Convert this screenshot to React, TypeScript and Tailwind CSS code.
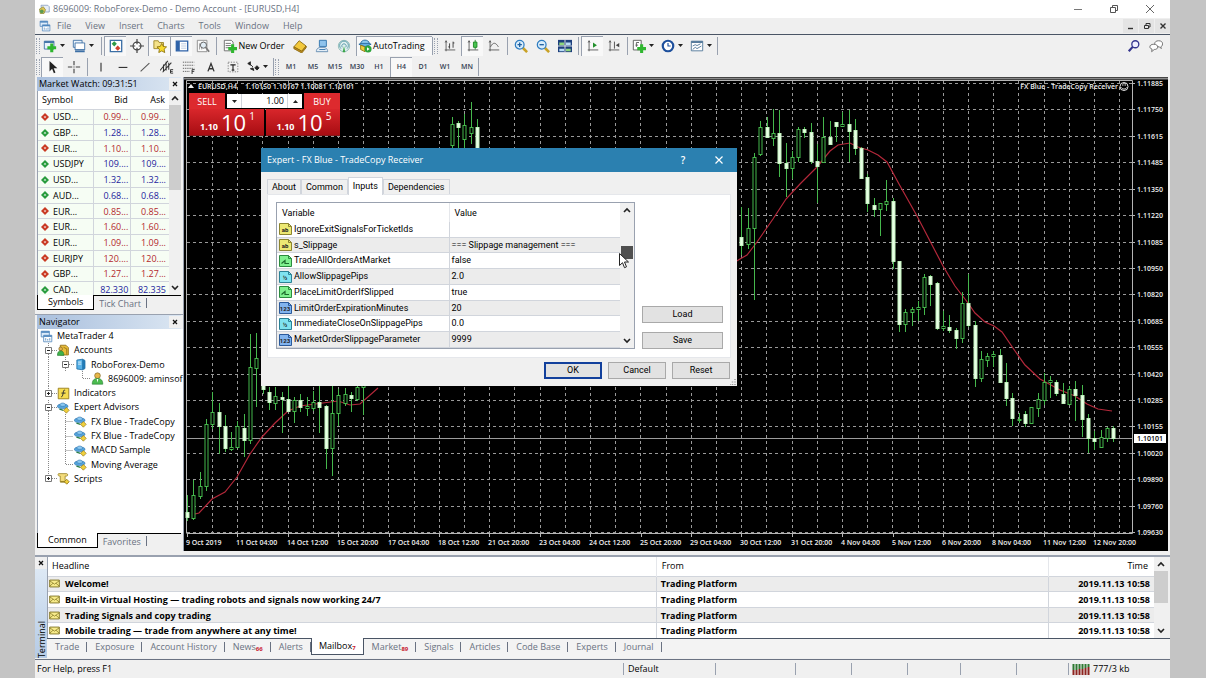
import type { ReactNode } from 'react';
import clsx from 'clsx';

/* ---------- icons ---------- */

const axes = <path d="M3.5 2v12M2 12.5h12M2.5 4l1-2 1 2" fill="none" stroke="#555" />;
const greenPlus = (x: number, y: number) => (
  <path
    d={`M${x} ${y - 5}v10M${x - 5} ${y}h10`}
    stroke="#2fb62f"
    strokeWidth="3.5"
    fill="none"
  />
);
const hat = (
  <>
    <ellipse cx="7" cy="6.5" rx="6.5" ry="2.8" fill="#55a5de" stroke="#2a6ea8" strokeWidth=".7" />
    <path d="M3.5 5.5C3.5 1.5 10.5 1.5 10.5 5.5 9 7 5 7 3.5 5.5z" fill="#8ccaf2" stroke="#2a6ea8" strokeWidth=".7" />
    <path d="M3 10l5 1.5" stroke="#2a7c46" strokeWidth="1.5" />
    <path d="M11.5 8l3.500 3.500-3.500 3.500L8 11.500z" fill="#f0cf3c" stroke="#8c7212" strokeWidth=".8" />
  </>
);

const icons: Record<string, ReactNode> = {
  app: (
    <>
      <path d="M4 3h9l2 2v7H5z" fill="#e8eef6" stroke="#7d96bb" />
      <path d="M2 8l5-3 3 4-2 5H3z" fill="#e0c352" stroke="#8a8a3a" />
      <circle cx="5" cy="11" r="2.5" fill="#5a9b53" />
    </>
  ),
  windows: (
    <>
      <path d="M1.5 1.5h10v7h-10z" fill="#dcebfa" stroke="#4f86bd" />
      <path d="M1.5 2.5h10" stroke="#4f86bd" strokeWidth="2" />
      <path d="M4.5 6.5h10v8h-10z" fill="#fff" stroke="#4f86bd" />
      <path d="M4.5 7.5h10" stroke="#4f86bd" strokeWidth="2" />
      <path d="M7 13v-3M9.5 13v-2M12 13v-3" stroke="#4f86bd" />
    </>
  ),
  newChart: (
    <>
      <path d="M1.5 2.5h11v9h-11z" fill="#e8f2fb" stroke="#3c6fa5" />
      <path d="M1.5 3.5h11" stroke="#3c6fa5" strokeWidth="2" />
      {greenPlus(10, 10)}
    </>
  ),
  profiles: (
    <>
      <path d="M1.5 1.5h10v8h-10z" fill="#e8f2fb" stroke="#3c6fa5" />
      <path d="M3.5 4.5h11v8h-11z" fill="#fff" stroke="#3c6fa5" />
      <path d="M3.5 12.5h11M3.5 14.5h11" stroke="#3c6fa5" strokeWidth="1.5" />
    </>
  ),
  marketWatch: (
    <>
      <path d="M1.5 1.5h13v13h-13z" fill="#fff" stroke="#3c6fa5" strokeWidth="1.5" />
      <path d="M6 2.5L9 5.5 6 8.5 3 5.5z" fill="#2f9a46" />
      <path d="M10 7.5l3 3-3 3-3-3z" fill="#d2402f" />
    </>
  ),
  target: (
    <>
      <circle cx="8" cy="8" r="4.5" fill="#fff" stroke="#444" strokeWidth="1.4" />
      <path d="M8 0v6M8 10v6M0 8h6M10 8h6" stroke="#444" strokeWidth="1.4" />
    </>
  ),
  star: (
    <>
      <path d="M1 2h5l1 2h5v7H1z" fill="#f4e28a" stroke="#9a8424" />
      <path d="M10 5l1.7 3.5 3.8.5-2.8 2.6.7 3.9-3.4-1.9-3.4 1.9.7-3.9L4.5 9l3.800-.5z" fill="#f6d92e" stroke="#8e7410" />
    </>
  ),
  terminal: (
    <>
      <path d="M1.5 2.5h13v11h-13z" fill="#fff" stroke="#2e62a8" strokeWidth="1.5" />
      <path d="M2 2.5h3.5v11H2z" fill="#2e62a8" />
      <path d="M7 5.5h6M7 8h6M7 10.5h6" stroke="#b4c6de" />
    </>
  ),
  tester: (
    <>
      <path d="M1.5 1.5h11v13h-11z" fill="#fafafa" stroke="#888" />
      <path d="M4 12V5M6.5 12V8" stroke="#999" />
      <circle cx="8.5" cy="7" r="3.5" fill="#e2edf5" stroke="#555" />
      <path d="M11 9.5l4 5" stroke="#777" strokeWidth="2" />
    </>
  ),
  order: (
    <>
      <path d="M1.5 1.5h8l2 2v10h-10z" fill="#fff" stroke="#666" />
      <path d="M3 5h6M3 7.5h6M3 10h4" stroke="#666" />
      {greenPlus(11, 11)}
    </>
  ),
  book: (
    <>
      <path d="M1 9l6-7 8 6-5 6z" fill="#f3c93c" stroke="#8a6a10" />
      <path d="M1 9v2l9 5 5-6V8l-5 6z" fill="#c98f1e" stroke="#8a6a10" />
    </>
  ),
  person: (
    <>
      <path d="M5 1.5h8v7H5z" fill="#8fc3ec" stroke="#2d70aa" />
      <path d="M1.5 14.5c0-4 3-5 6.500-5s6.500 1 6.500 5z" fill="#e4eef7" stroke="#5b86ad" />
      <path d="M5 12h7" stroke="#2d70aa" />
    </>
  ),
  signal: (
    <>
      <circle cx="8" cy="8" r="6.5" fill="#dff0ee" stroke="#8ab8b5" />
      <path d="M4.5 11a5 5 0 1 1 7 0M6 9.5a2.500 2.500 0 1 1 4 0" fill="none" stroke="#4f94a6" />
      <path d="M8 8l-1.500 7h3z" fill="#39a447" />
    </>
  ),
  autoTrading: (
    <>
      <path d="M1 6l7-3 7 3-7 3z" fill="#62aee2" stroke="#24669c" />
      <path d="M3 7v5l5 2.500V9z" fill="#f0cf3c" stroke="#8e7410" />
      <path d="M3 5C4 0 12 0 13 5z" fill="#8dcaf1" stroke="#24669c" />
      <circle cx="11.5" cy="11.5" r="4" fill="#2da53b" />
      <path d="M10.3 9.500v4l3-2z" fill="#fff" />
    </>
  ),
  bars: (
    <>
      {axes}
      <path d="M7.5 5v6M7.5 9H6M11.5 3v7M11.5 4.5H13" stroke="#333" fill="none" />
    </>
  ),
  candles: (
    <>
      {axes}
      <path d="M10.5 1v11" stroke="#19861f" />
      <path d="M8.5 3.5h4v6h-4z" fill="#48c44f" stroke="#19861f" />
    </>
  ),
  line: (
    <>
      {axes}
      <path d="M4 9c3-6 6-5 9 0" fill="none" stroke="#555" />
    </>
  ),
  zoomIn: (
    <>
      <path d="M10 10l5 5" stroke="#c9a227" strokeWidth="3" />
      <circle cx="6.5" cy="6.5" r="5" fill="#d9edfb" stroke="#2e7cc0" strokeWidth="1.4" />
      <path d="M4 6.5h5M6.5 4v5" stroke="#1f5fa0" strokeWidth="1.5" />
    </>
  ),
  zoomOut: (
    <>
      <path d="M10 10l5 5" stroke="#c9a227" strokeWidth="3" />
      <circle cx="6.5" cy="6.5" r="5" fill="#d9edfb" stroke="#2e7cc0" strokeWidth="1.4" />
      <path d="M4 6.5h5" stroke="#1f5fa0" strokeWidth="1.5" />
    </>
  ),
  tile: (
    <>
      <path d="M0 1h16v14H0z" fill="#1d3f7c" />
      <path d="M1.5 4h5.500v3H1.500zM9 11h5.500v3H9z" fill="#8ed67d" />
      <path d="M9 4h5.500v3H9zM1.500 11h5.500v3H1.500z" fill="#b9dcf5" />
      <path d="M8 1v14M0 8h16" stroke="#f0f0f0" />
    </>
  ),
  autoScroll: (
    <>
      {axes}
      <path d="M8 4v6l4.500-3z" fill="#22902c" />
    </>
  ),
  shift: (
    <>
      {axes}
      <path d="M8.5 3v8" stroke="#444" />
      <path d="M14 4.500v5L10 7z" fill="#444" />
    </>
  ),
  indicator: (
    <>
      <path d="M1.5 1.5h9v11h-9z" fill="#fff" stroke="#555" />
      <path d="M5 9V4h3M4 7h3" stroke="#555" fill="none" />
      {greenPlus(11, 11)}
    </>
  ),
  clock: (
    <>
      <circle cx="8" cy="8" r="6" fill="#fff" stroke="#1d4f9c" strokeWidth="2.5" />
      <path d="M8 4.500V8h3" fill="none" stroke="#1d4f9c" strokeWidth="1.3" />
    </>
  ),
  template: (
    <>
      <path d="M1.5 2.5h13v11h-13z" fill="#fff" stroke="#4c7396" />
      <path d="M1.5 3.5h13" stroke="#4c7396" strokeWidth="2" />
      <path d="M3 8l3-1.500 2 1 4-2M3 12l3-2.500 2 1.500 5-3" fill="none" stroke="#4c7396" />
    </>
  ),
  cursor: <path d="M4 1v12l3-3 2 5 1.800-.8L8.800 9.500H13z" fill="#222" />,
  cross: <path d="M8 1v5M8 10v5M1 8h5M10 8h5M8 7.500v1" stroke="#444" strokeWidth="1.3" />,
  vline: <path d="M8 3v10" stroke="#333" strokeWidth="1.3" />,
  hline: <path d="M3 8.500h10" stroke="#333" strokeWidth="1.3" />,
  trend: <path d="M3 13L13 3.500" stroke="#555" strokeWidth="1.2" />,
  channel: (
    <>
      <path d="M0 12L9 1M3 14L13 3M7 2v10M4 5v8M10 3v8" stroke="#333" strokeWidth="1.2" />
      <path d="M15 11h-3v4h3M12 13h2.500" stroke="#222" fill="none" />
    </>
  ),
  fibo: (
    <>
      <path d="M1 2.500h13M1 6h13M1 9.500h13M1 13h8" stroke="#555" strokeDasharray="1.5 1" />
      <path d="M14.5 11h-3v5M11.500 13h2.500" stroke="#222" fill="none" />
    </>
  ),
  textA: <path d="M4.500 13L8 4l3.500 9M6 10h4" stroke="#333" strokeWidth="1.5" fill="none" />,
  textT: (
    <>
      <path d="M2.500 2.500h11v11h-11z" fill="none" stroke="#777" strokeDasharray="1.5 1.5" />
      <path d="M5 5.500h6M8 5.500v6M6.500 11.500h3" stroke="#222" strokeWidth="1.3" />
    </>
  ),
  arrows: (
    <path d="M2 4l3-2v4zM5 5l3 3M10 9l2.500-2.500L15 9l-2.500 2.500zM5 10l3-1 1 3z" fill="#222" stroke="#222" />
  ),
  search: (
    <>
      <circle cx="9.500" cy="6" r="4" fill="#eef" stroke="#34348e" strokeWidth="1.5" />
      <path d="M6.500 9L2 14" stroke="#34348e" strokeWidth="2.5" />
    </>
  ),
  chat: (
    <>
      <path d="M11 2c3 0 4.500 1.500 4.500 3.500S14 9 13.500 9l.5 2-2-2C8 9 6.500 7.500 6.500 5.500S8 2 11 2z" fill="#fff" stroke="#666" />
      <path d="M5.500 6C8.500 6 10 7.500 10 9.200S8.500 12 6 12l-3 2.500.5-3C1.500 11 1 10 1 9c0-1.700 1.500-3 4.500-3z" fill="#fff" stroke="#666" />
    </>
  ),
  accounts: (
    <>
      <path d="M4 1.500h7l3 3v9H4z" fill="#e9bd3a" stroke="#8e6b12" />
      <path d="M8 4l4 2v7" fill="none" stroke="#8e6b12" />
      <circle cx="4.500" cy="6" r="2.300" fill="#e4b24c" stroke="#6e5518" strokeWidth=".7" />
      <path d="M.5 14c0-4 1.500-5.500 4-5.500S8.500 10 8.500 14z" fill="#3fb24b" stroke="#20772a" strokeWidth=".7" />
    </>
  ),
  server: (
    <>
      <path d="M3.500 2.500l7-1v13l-7-1z" fill="#57b2e8" stroke="#1f6ea5" />
      <path d="M10.500 1.500l3 1.500v10l-3 1.500" fill="#1f7cba" stroke="#1f6ea5" />
      <path d="M5 5h4M5 7.500h4" stroke="#fff" />
    </>
  ),
  user: (
    <>
      <circle cx="8" cy="4.500" r="3.500" fill="#e8b74a" stroke="#6e5518" strokeWidth=".7" />
      <path d="M1.500 15c0-5 2.500-7 6.500-7s6.500 2 6.500 7z" fill="#4bbb4f" stroke="#20772a" strokeWidth=".7" />
      <path d="M7 8.500h2L8 13z" fill="#fff" />
    </>
  ),
  fx: (
    <>
      <path d="M1.500 1.500h13v13h-13z" fill="#f5dc50" stroke="#8e7410" />
      <path d="M10 4c-2-1-2 1-2.500 4S6 12.500 5 12M5.500 7.500h5" fill="none" stroke="#333" strokeWidth="1.2" />
    </>
  ),
  expert: hat,
  script: (
    <>
      <path d="M2 2h10c1.500 0 1.500 3 0 3h-2v7H4V5H3C1 5 1 2 2 2z" fill="#f3dc7c" stroke="#9a8424" />
      <path d="M4 12h7" stroke="#9a8424" strokeWidth="2" />
      <path d="M12 9l3 3-3 3-3-3z" fill="#f0cf3c" stroke="#8c7212" />
    </>
  ),
  mail: (
    <>
      <path d="M1 3h14v10H1z" fill="#f7eb8a" stroke="#7c6f1d" strokeWidth="1.3" />
      <path d="M1 4l7 5 7-5M1 12l5-4.500M15 12l-5-4.500" fill="none" stroke="#7c6f1d" />
    </>
  ),
};

function Icon({ name, className = 'size-[14px]' }: { name: string; className?: string }) {
  return (
    <svg viewBox="0 0 16 16" className={clsx('shrink-0', className)} aria-hidden="true">
      {icons[name]}
    </svg>
  );
}

/* ---------- toolbar parts ---------- */

const Grip = () => <span className="w-1 h-4 mx-px border-x border-dotted border-gray-400" />;
const Sep = () => <span className="w-px h-[18px] mx-[2px] bg-gray-400" />;
const Caret = () => (
  <svg viewBox="0 0 5 3" className="w-[5px] h-[3px]" aria-hidden="true">
    <path d="M0 0h5L2.500 3z" fill="#222" />
  </svg>
);

type ToolProps = { icon: string; label: string; active?: boolean; menu?: boolean };

function Tool({ icon, label, active, menu }: ToolProps) {
  return (
    <button
      aria-label={label}
      className={clsx(
        'h-5 flex items-center',
        menu ? 'w-[29px] gap-[3px] pl-[2px]' : 'w-[22px] justify-center',
        active && 'bg-[#f8f8f8] border-t border-l border-gray-400',
      )}
    >
      <Icon name={icon} />
      {menu && <Caret />}
    </button>
  );
}

const Chevron = ({ up }: { up?: boolean }) => (
  <svg viewBox="0 0 8 6" className="w-2 h-[6px]" aria-hidden="true">
    <path d={up ? 'M1 5l3-3 3 3' : 'M1 1l3 3 3-3'} fill="none" stroke="#222" strokeWidth="1.6" />
  </svg>
);

function ScrollBar({ thumb, className }: { thumb: string; className?: string }) {
  return (
    <div className={clsx('flex flex-col items-stretch bg-[#f0f0f0] shrink-0', className)}>
      <button aria-label="Scroll up" className="h-[14px] flex items-center justify-center">
        <Chevron up />
      </button>
      <div className="flex-1">
        <div className={thumb} />
      </div>
      <button aria-label="Scroll down" className="h-[14px] flex items-center justify-center">
        <Chevron />
      </button>
    </div>
  );
}

/* ---------- header ---------- */

function TitleBar() {
  return (
    <header className="h-[18px] flex items-center bg-white text-gray-500 pl-[3px]">
      <Icon name="app" className="size-3" />
      <h1 className="ml-[3px] flex-1">8696009: RoboForex-Demo - Demo Account - [EURUSD,H4]</h1>
      <div className="flex pr-[2px]">
        <button aria-label="Minimize" className="w-9 flex justify-center">
          <svg viewBox="0 0 10 10" className="size-[10px]"><path d="M1 5.500h8" stroke="#777" /></svg>
        </button>
        <button aria-label="Restore" className="w-9 flex justify-center">
          <svg viewBox="0 0 10 10" className="size-[10px]">
            <path d="M1.500 3.500h5v5h-5zM3.500 3V1.500h5v5H7" fill="none" stroke="#555" />
          </svg>
        </button>
        <button aria-label="Close" className="w-9 flex justify-center">
          <svg viewBox="0 0 10 10" className="size-[10px]"><path d="M1 1l8 8M9 1L1 9" stroke="#666" /></svg>
        </button>
      </div>
    </header>
  );
}

function MenuBar() {
  const menus = ['File', 'View', 'Insert', 'Charts', 'Tools', 'Window', 'Help'];
  return (
    <nav className="h-[17px] flex items-center bg-[#efefef] border-b border-gray-600 pl-1 text-gray-500">
      <Icon name="windows" className="size-3 mr-[6px]" />
      <div className="flex-1 flex gap-[14px]">
        {menus.map((m) => (
          <button key={m}>{m}</button>
        ))}
      </div>
      <div className="flex gap-px">
        <button aria-label="Minimize chart" className="w-[15px] h-[14px] bg-[#e4e4e4] flex items-center justify-center">
          <svg viewBox="0 0 8 8" className="size-2"><path d="M1 6.500h5" stroke="#333" strokeWidth="1.4" /></svg>
        </button>
        <button aria-label="Restore chart" className="w-[15px] h-[14px] bg-[#e4e4e4] flex items-center justify-center">
          <svg viewBox="0 0 8 8" className="size-2">
            <path d="M1.500 3.500h4v3h-4zM3 3V1.500h4V5H6" fill="none" stroke="#333" />
          </svg>
        </button>
        <button aria-label="Close chart" className="w-[15px] h-[14px] bg-[#e4e4e4] flex items-center justify-center">
          <svg viewBox="0 0 8 8" className="size-2"><path d="M1.500 1.500l5 5M6.500 1.500l-5 5" stroke="#333" strokeWidth="1.4" /></svg>
        </button>
      </div>
    </nav>
  );
}

function Toolbars() {
  const frames = ['M1', 'M5', 'M15', 'M30', 'H1', 'H4', 'D1', 'W1', 'MN'];
  return (
    <div className="bg-[#f0f0f0]">
      <div className="h-[21px] flex items-center">
        <Grip />
        <Tool icon="newChart" label="New chart" menu />
        <Tool icon="profiles" label="Profiles" menu />
        <Sep />
        <Tool icon="marketWatch" label="Market Watch" active />
        <Tool icon="target" label="Data Window" />
        <Tool icon="star" label="Navigator" active />
        <Tool icon="terminal" label="Terminal" active />
        <Tool icon="tester" label="Strategy Tester" />
        <Sep />
        <button className="h-5 w-[70px] flex items-center justify-center gap-px text-black">
          <Icon name="order" />
          New Order
        </button>
        <Tool icon="book" label="MetaEditor" />
        <Tool icon="person" label="Account" />
        <Tool icon="signal" label="Signals" />
        <button className="h-5 w-[76px] ml-px flex items-center gap-px pl-px text-black bg-[#f8f8f8] border-t border-l border-gray-400">
          <Icon name="autoTrading" />
          AutoTrading
        </button>
        <span className="w-px h-[18px] bg-gray-400" />
        <Grip />
        <Tool icon="bars" label="Bar chart" />
        <Tool icon="candles" label="Candlesticks" active />
        <Tool icon="line" label="Line chart" />
        <Sep />
        <Tool icon="zoomIn" label="Zoom in" />
        <Tool icon="zoomOut" label="Zoom out" />
        <Tool icon="tile" label="Tile windows" />
        <Sep />
        <Tool icon="autoScroll" label="Auto scroll" active />
        <Tool icon="shift" label="Chart shift" />
        <Sep />
        <Tool icon="indicator" label="Indicators" menu />
        <Tool icon="clock" label="Periods" menu />
        <Tool icon="template" label="Templates" menu />
        <span className="w-px h-[18px] bg-gray-400" />
        <div className="ml-auto flex items-center pr-[3px]">
          <Tool icon="search" label="Search" />
          <Tool icon="chat" label="Community" />
        </div>
      </div>
      <div className="h-[21px] flex items-center">
        <Grip />
        <Tool icon="cursor" label="Cursor" active />
        <Tool icon="cross" label="Crosshair" />
        <Sep />
        <Tool icon="vline" label="Vertical line" />
        <Tool icon="hline" label="Horizontal line" />
        <Tool icon="trend" label="Trendline" />
        <Tool icon="channel" label="Equidistant channel" />
        <Tool icon="fibo" label="Fibonacci retracement" />
        <Tool icon="textA" label="Text" />
        <Tool icon="textT" label="Text label" />
        <Tool icon="arrows" label="Arrows" menu />
        <span className="w-px h-[18px] bg-gray-400" />
        <Grip />
        {frames.map((f) => (
          <button
            key={f}
            className={clsx(
              'w-[22px] h-5 text-[7px] font-semibold text-gray-700',
              f === 'H4' && 'bg-[#f8f8f8] border-t border-l border-gray-400',
            )}
          >
            {f}
          </button>
        ))}
        <span className="w-px h-[18px] bg-gray-400" />
      </div>
    </div>
  );
}

/* ---------- left panels ---------- */

type Quote = [symbol: string, bid: string, ask: string, up: boolean];

const quotes: Quote[] = [
  ['USD...', '0.99...', '0.99...', false],
  ['GBP...', '1.28...', '1.28...', true],
  ['EUR...', '1.10...', '1.10...', false],
  ['USDJPY', '109....', '109....', true],
  ['USD...', '1.32...', '1.32...', true],
  ['AUD...', '0.68...', '0.68...', true],
  ['EUR...', '0.85...', '0.85...', false],
  ['EUR...', '1.60...', '1.60...', false],
  ['EUR...', '1.09...', '1.09...', false],
  ['EURJPY', '120....', '120....', false],
  ['GBP...', '1.27...', '1.27...', false],
  ['CAD...', '82.330', '82.335', true],
];

function PanelTitle({ children }: { children: ReactNode }) {
  return (
    <div className="h-[14px] flex items-center justify-between bg-linear-to-r from-[#a9bfdd] to-[#dbe6f2] pl-[2px] text-black">
      <h2>{children}</h2>
      <button aria-label="Close panel" className="w-3 h-3 flex items-center justify-center bg-[#f0f0f0]">
        <svg viewBox="0 0 6 6" className="size-[6px]"><path d="M1 1l4 4M5 1L1 5" stroke="#111" strokeWidth="1.3" /></svg>
      </button>
    </div>
  );
}

function PanelTabs({ active, other }: { active: string; other: string }) {
  return (
    <div className="flex h-[15px] bg-[#f0f0f0] border-t border-black">
      <button className="-mt-px px-[10px] bg-white border-x border-b border-black text-black">{active}</button>
      <button className="my-[2px] px-[5px] border-r border-gray-500 text-gray-500 leading-none">{other}</button>
    </div>
  );
}

function MarketWatch() {
  return (
    <section className="px-[2px]">
      <PanelTitle>Market Watch: 09:31:51</PanelTitle>
      <div className="h-[204px] flex items-start bg-white overflow-hidden border-l border-gray-400">
        <table className="flex-1 h-[207px] table-fixed border-collapse text-black">
          <thead>
            <tr className="h-[18px]">
              <th className="w-[54px] p-0 pl-1 text-left font-normal border-b border-gray-300">Symbol</th>
              <th className="w-[36px] p-0 pr-[3px] text-right font-normal border-b border-gray-300">Bid</th>
              <th className="w-[37px] p-0 pr-1 text-right font-normal border-b border-gray-300">Ask</th>
            </tr>
          </thead>
          <tbody>
            {quotes.map(([symbol, bid, ask, up], i) => (
              <tr key={i} className={clsx('bg-[#f6fdf4]', up ? 'text-[#1c1c9c]' : 'text-[#b3282c]')}>
                <td className="p-0 border-b border-r border-gray-300 text-black leading-none">
                  <span className="flex items-center gap-1 pl-[3px]">
                    <svg viewBox="0 0 9 9" className="size-2" aria-hidden="true">
                      <path d="M4.500 0L9 4.500 4.500 9 0 4.500z" fill={up ? '#279b3c' : '#c93a22'} />
                      <path d={up ? 'M4.500 3L6 5H3z' : 'M4.500 6L6 4H3z'} fill="#fff" />
                    </svg>
                    {symbol}
                  </span>
                </td>
                <td className="p-0 pr-[2px] border-b border-r border-gray-300 text-right leading-none">{bid}</td>
                <td className="p-0 pr-[3px] border-b border-gray-300 text-right leading-none">{ask}</td>
              </tr>
            ))}
          </tbody>
        </table>
        <ScrollBar className="w-3 h-[204px]" thumb="h-[85px] bg-[#cdcdcd]" />
      </div>
      <PanelTabs active="Symbols" other="Tick Chart" />
    </section>
  );
}

type Guide = 'v' | 't' | 'l' | 'e' | '-' | '+';

const tree: { label: string; icon: string; guides: Guide[] }[] = [
  { label: 'MetaTrader 4', icon: 'windows', guides: [] },
  { label: 'Accounts', icon: 'accounts', guides: ['-'] },
  { label: 'RoboForex-Demo', icon: 'server', guides: ['v', '-'] },
  { label: '8696009: aminsof', icon: 'user', guides: ['v', 'e', 'l'] },
  { label: 'Indicators', icon: 'fx', guides: ['+'] },
  { label: 'Expert Advisors', icon: 'expert', guides: ['-'] },
  { label: 'FX Blue - TradeCopy', icon: 'expert', guides: ['v', 't'] },
  { label: 'FX Blue - TradeCopy', icon: 'expert', guides: ['v', 't'] },
  { label: 'MACD Sample', icon: 'expert', guides: ['v', 't'] },
  { label: 'Moving Average', icon: 'expert', guides: ['v', 'l'] },
  { label: 'Scripts', icon: 'script', guides: ['+'] },
];

const guidePaths: Record<Guide, string> = {
  v: 'M8.500 0v15',
  t: 'M8.500 0v15M8.500 7.500h8',
  l: 'M8.500 0v7.500h8',
  e: '',
  '-': 'M8.500 0v3M8.500 11v4M12 7.500h5',
  '+': 'M8.500 0v3M12 7.500h5',
};

function GuideCell({ kind }: { kind: Guide }) {
  const box = kind === '-' || kind === '+';
  return (
    <svg viewBox="0 0 17 15" className="w-[17px] h-[15px] shrink-0" aria-hidden="true">
      <path d={guidePaths[kind]} fill="none" stroke="#888" strokeDasharray="1 1" />
      {box && <path d="M5.500 4.500h6v6h-6z" fill="#fff" stroke="#777" />}
      {box && <path d={kind === '-' ? 'M7 7.500h3' : 'M7 7.500h3M8.500 6v3'} stroke="#222" />}
    </svg>
  );
}

function Navigator() {
  return (
    <section className="mt-1 pl-[2px] pb-[3px] border-t border-gray-400 flex-1 flex flex-col">
      <div className="pr-[2px]">
        <PanelTitle>Navigator</PanelTitle>
      </div>
      <div className="flex-1 bg-white border-l border-gray-400 text-black">
        <ul className="h-[157px] flex flex-col pl-[2px]">
          {tree.map((node, i) => (
            <li key={i} className="flex-1 min-h-0 flex items-center whitespace-nowrap">
              {node.guides.map((g, j) => (
                <GuideCell key={j} kind={g} />
              ))}
              <Icon name={node.icon} className="size-[13px]" />
              <span className="ml-1">{node.label}</span>
            </li>
          ))}
        </ul>
      </div>
      <div className="pr-[2px]">
        <PanelTabs active="Common" other="Favorites" />
      </div>
    </section>
  );
}

/* ---------- chart ---------- */

const STEP = 6.3;
const X0 = 187;

// [high, low, body top, body bottom, filled]
type Bar = [number, number, number, number, 0 | 1];

const leftBars: Bar[] = [
  [496, 522, 513, 518, 1], [481, 521, 496, 519, 0], [473, 500, 487, 497, 0], [420, 492, 425, 487, 0],
  [393, 430, 413, 425, 0], [404, 455, 413, 427, 1], [416, 453, 427, 449, 1], [433, 452, 448, 450, 0],
  [422, 449, 427, 448, 0], [415, 458, 429, 441, 1], [335, 445, 368, 441, 0], [334, 408, 359, 369, 0],
  [380, 395, 382, 390, 1], [388, 411, 393, 403, 1], [388, 411, 397, 404, 0], [393, 434, 398, 400, 1],
  [385, 412, 400, 412, 1], [398, 424, 401, 412, 0], [395, 413, 401, 408, 1], [398, 417, 407, 409, 0],
  [392, 412, 403, 409, 0], [387, 434, 403, 408, 1], [406, 470, 407, 449, 1], [385, 477, 414, 449, 0],
  [390, 427, 396, 414, 0], [389, 407, 395, 404, 0], [393, 413, 396, 399, 1], [386, 402, 388, 400, 0],
  [380, 416, 382, 388, 0],
];

const midBars: Bar[] = [
  [118, 160, 125, 146, 0], [122, 150, 124, 128, 1], [115, 150, 126, 140, 0], [103, 145, 128, 134, 0],
  [120, 150, 128, 150, 1],
];

const rightBars: Bar[] = [
  [208, 256, 238, 246, 1], [209, 250, 229, 245, 0], [154, 301, 158, 229, 0], [122, 157, 128, 155, 0],
  [118, 139, 128, 138, 1], [110, 147, 134, 139, 0], [111, 178, 134, 164, 1], [144, 198, 164, 169, 1],
  [152, 180, 158, 169, 0], [128, 163, 130, 158, 0], [128, 139, 130, 133, 1], [124, 165, 133, 162, 1],
  [145, 204, 162, 167, 1], [118, 164, 138, 163, 0], [122, 145, 138, 145, 1], [123, 143, 123, 127, 1],
  [113, 127, 125, 127, 0], [111, 163, 125, 132, 1], [120, 156, 131, 149, 1], [148, 179, 149, 179, 1],
  [175, 213, 178, 204, 1], [199, 218, 206, 210, 1], [204, 237, 204, 210, 0], [181, 212, 202, 205, 0],
  [199, 270, 202, 262, 1], [262, 333, 262, 325, 1], [310, 333, 313, 325, 0], [308, 327, 310, 313, 0],
  [302, 322, 308, 310, 0], [275, 316, 278, 308, 0], [276, 307, 277, 285, 1], [283, 331, 284, 329, 1],
  [312, 332, 327, 329, 0], [316, 334, 328, 331, 1], [329, 350, 331, 339, 1], [293, 344, 304, 339, 0],
  [275, 328, 304, 326, 1], [322, 388, 326, 379, 1], [352, 383, 360, 379, 0], [354, 368, 357, 361, 0],
  [352, 368, 355, 357, 0], [350, 383, 356, 383, 1], [364, 407, 383, 399, 1], [394, 427, 399, 419, 1],
  [414, 424, 420, 421, 0], [412, 428, 415, 424, 1], [408, 425, 408, 424, 0], [394, 418, 400, 409, 0],
  [374, 406, 383, 401, 0], [377, 399, 381, 383, 0], [381, 397, 383, 394, 1], [384, 404, 395, 404, 1],
  [387, 405, 390, 405, 0], [382, 422, 390, 396, 1], [386, 438, 396, 420, 1], [415, 454, 419, 439, 1],
  [432, 451, 439, 442, 1], [431, 449, 438, 448, 0], [428, 443, 429, 439, 0], [427, 443, 429, 439, 1],
];

const prices = [
  '1.11885', '1.11750', '1.11615', '1.11485', '1.11350', '1.11220', '1.11085', '1.10950', '1.10820',
  '1.10685', '1.10555', '1.10420', '1.10285', '1.10155', '1.10020', '1.09890', '1.09760', '1.09630',
];

const dates = [
  '9 Oct 2019', '11 Oct 04:00', '14 Oct 12:00', '15 Oct 20:00', '17 Oct 04:00', '18 Oct 12:00',
  '21 Oct 20:00', '23 Oct 04:00', '24 Oct 12:00', '25 Oct 20:00', '29 Oct 04:00', '30 Oct 12:00',
  '31 Oct 20:00', '4 Nov 04:00', '5 Nov 12:00', '6 Nov 20:00', '8 Nov 04:00', '11 Nov 12:00',
  '12 Nov 20:00',
];

const priceY = (i: number) => Math.round(84 + i * 26.42);

function Bars({ data, start }: { data: Bar[]; start: number }) {
  return (
    <>
      {data.map(([high, low, top, bottom, filled], i) => {
        const x = Math.round(X0 + (start + i) * STEP) + 0.5;
        return (
          <g key={i} stroke="#45b84c">
            <path d={`M${x} ${high}V${low}`} />
            <rect
              x={x - 1.5}
              y={top + 0.5}
              width={3}
              height={Math.max(bottom - top, 1)}
              fill={filled ? '#e9ffe6' : '#000'}
              stroke={filled ? '#c4f5c0' : '#45b84c'}
            />
          </g>
        );
      })}
    </>
  );
}

function PriceChart() {
  return (
    <svg
      viewBox="184 78 984 474"
      preserveAspectRatio="xMinYMin meet"
      className="block w-full h-[474px] bg-black font-semibold"
      role="img"
      aria-label="EURUSD,H4 price chart"
    >
      <g stroke="#999" strokeDasharray="3 3">
        {prices.map((p, i) => (
          <path key={p} d={`M187 ${priceY(i) + 0.5}H1132`} />
        ))}
        {Array.from({ length: 37 }, (_, i) => (
          <path key={i} d={`M${Math.round(212 + i * 25.2) + 0.5} 82V534`} />
        ))}
      </g>
      <path d="M184 79.500h984" stroke="#8a8a8a" strokeWidth="2" />
      <path d="M186.500 534V81.500H1132.500V534.500H186.500" fill="none" stroke="#b5b5b5" />
      <path d="M187 439.500H1132" stroke="#9c9c9c" />
      <g fill="none" stroke="#b3283a" strokeWidth="1.2">
        <path d="M195 515L199 514 212 500 225 493 237 478 250 455 262 438 275 424 288 412 300 407 338 402 350 406 360 405 378 389" />
        <path d="M735 263L740 260 747 256 757 243 773 220 786 200 800 185 817 168 830 152 838 146 850 144 858 148 868 151 878 156 887 163 899 185 917 217 943 267 955 287 968 304 975 314 985 323 994 327 1002 333 1015 352 1025 366 1040 380 1060 391 1075 397 1087 405 1098 410 1112 412" />
      </g>
      <Bars data={leftBars} start={0} />
      <Bars data={midBars} start={42} />
      <Bars data={rightBars} start={88} />
      <g fill="#f0f0f0" fontSize="7">
        {prices.map((p, i) => (
          <g key={p}>
            <path d={`M1132 ${priceY(i) + 0.5}h3`} stroke="#b5b5b5" />
            <text x="1137" y={priceY(i) + 3}>{p}</text>
          </g>
        ))}
        {dates.map((d, i) => (
          <g key={d}>
            <path d={`M${Math.round(187 + i * 50.4) + 0.5} 534v4`} stroke="#b5b5b5" />
            <text x={Math.round(186 + i * 50.4)} y="546">{d}</text>
          </g>
        ))}
        <path d="M188 89h6l-3-4z" />
        <text x="198" y="90">EURUSD,H4</text>
        <text x="245" y="90">1.10150 1.10167 1.10081 1.10101</text>
        <text x="1118" y="90" textAnchor="end">FX Blue - TradeCopy Receiver</text>
      </g>
      <circle cx="1124" cy="87.500" r="4" fill="none" stroke="#e4e4e4" />
      <path d="M1121.500 88.500c1 2 4 2 5 0M1122 86h1.500M1124.500 86h1.500" fill="none" stroke="#e4e4e4" />
      <rect x="1134" y="435" width="32" height="9" fill="#fff" />
      <text x="1137" y="442" fontSize="7" fill="#000">1.10101</text>
    </svg>
  );
}

function QuickTrade() {
  return (
    <div className="absolute left-[5px] top-4 w-[151px] text-white">
      <div className="flex gap-[2px] h-4">
        <button className="w-9 bg-[#dd2a2e] leading-none">SELL</button>
        <div className="flex-1 min-w-0 h-[14px] mt-px flex items-center bg-white text-black">
          <button aria-label="Decrease volume" className="w-[15px] h-full flex items-center justify-center border-r border-gray-300">
            <Caret />
          </button>
          <input aria-label="Volume" defaultValue="1.00" className="flex-1 w-0 text-right pr-[3px] outline-none" />
          <button aria-label="Increase volume" className="w-[15px] h-full flex items-center justify-center border-l border-gray-300">
            <svg viewBox="0 0 5 3" className="w-[5px] h-[3px]"><path d="M0 3h5L2.500 0z" fill="#222" /></svg>
          </button>
        </div>
        <button className="w-9 bg-[#dd2a2e] leading-none">BUY</button>
      </div>
      <div className="flex gap-[2px] h-[27px]">
        {['1', '5'].map((pip) => (
          <div key={pip} className="flex-1 flex items-end pl-[11px] bg-linear-to-b from-[#d9262b] to-[#a80c12] border-b border-red-900">
            <span className="font-bold leading-none pb-1">1.10</span>
            <span className="ml-[3px] text-[22px] leading-[26px]">10</span>
            <span className="ml-[3px] text-[10px] leading-none self-start pt-[2px]">{pip}</span>
          </div>
        ))}
      </div>
    </div>
  );
}

/* ---------- dialog ---------- */

type Kind = 'ab' | 'bool' | 'num' | 'int';

const inputs: { kind: Kind; name: string; value: string }[] = [
  { kind: 'ab', name: 'IgnoreExitSignalsForTicketIds', value: '' },
  { kind: 'ab', name: 's_Slippage', value: '=== Slippage management ===' },
  { kind: 'bool', name: 'TradeAllOrdersAtMarket', value: 'false' },
  { kind: 'num', name: 'AllowSlippagePips', value: '2.0' },
  { kind: 'bool', name: 'PlaceLimitOrderIfSlipped', value: 'true' },
  { kind: 'int', name: 'LimitOrderExpirationMinutes', value: '20' },
  { kind: 'num', name: 'ImmediateCloseOnSlippagePips', value: '0.0' },
  { kind: 'int', name: 'MarketOrderSlippageParameter', value: '9999' },
];

function KindIcon({ kind }: { kind: Kind }) {
  const look = {
    ab: { fill: '#ece873', stroke: '#8c8530', text: 'ab' },
    bool: { fill: '#7ff08e', stroke: '#2c8c40', text: '' },
    num: { fill: '#7fe3ef', stroke: '#2b8296', text: '½' },
    int: { fill: '#82b4ee', stroke: '#2b5a9c', text: '123' },
  }[kind];
  return (
    <svg viewBox="0 0 13 12" className="w-[13px] h-3 shrink-0" aria-hidden="true">
      <path d="M.5 .5h9l3 3v8H.5z" fill={look.fill} stroke={look.stroke} />
      <path d="M9.500 .5v3h3" fill="none" stroke={look.stroke} />
      {kind === 'bool' ? (
        <path d="M2.500 8.500L6 5.500v3h4" fill="none" stroke="#1b6b2c" strokeWidth="1.2" />
      ) : (
        <text x="6" y="9" fontSize="6" fontWeight="700" textAnchor="middle" fill="#222">{look.text}</text>
      )}
    </svg>
  );
}

function DialogButton({ children, primary }: { children: ReactNode; primary?: boolean }) {
  return (
    <button
      className={clsx(
        'h-[17px] w-[58px] bg-[#e2e2e2] leading-none',
        primary ? 'border-2 border-[#12409c]' : 'border border-[#a9a9a9]',
      )}
    >
      {children}
    </button>
  );
}

function ExpertDialog() {
  const tabs = ['About', 'Common', 'Inputs', 'Dependencies'];
  return (
    <div
      role="dialog"
      aria-label="Expert - FX Blue - TradeCopy Receiver"
      className="absolute left-[77px] top-[71px] w-[476px] bg-[#f0f0f0] text-black pb-1"
    >
      <div className="h-6 flex items-center bg-[#2b80b0] text-white pl-[6px]">
        <h2 className="flex-1">Expert - FX Blue - TradeCopy Receiver</h2>
        <button aria-label="Help" className="w-9 text-[10px] font-semibold">?</button>
        <button aria-label="Close" className="w-9 flex justify-center">
          <svg viewBox="0 0 8 8" className="size-2"><path d="M.5 .5l7 7M7.500 .5l-7 7" stroke="#fff" strokeWidth="1.2" /></svg>
        </button>
      </div>

      <div className="mx-[6px] mt-1 font-[Roboto,sans-serif]">
        <div className="flex items-end h-[18px]" role="tablist">
          {tabs.map((t) => (
            <button
              key={t}
              role="tab"
              aria-selected={t === 'Inputs'}
              className={clsx(
                'px-1 border-t border-x border-gray-300',
                t === 'Inputs' ? 'h-[18px] bg-white pb-[2px] -mb-px' : 'h-[15px] bg-[#f0f0f0] leading-none',
              )}
            >
              {t}
            </button>
          ))}
        </div>
        <div className="flex bg-white border border-gray-200 pl-2 pr-[7px] pt-[7px] pb-2">
          <div className="flex-1 h-[147px] flex border border-gray-400 bg-white">
            <table className="flex-1 h-full table-fixed border-collapse">
              <thead>
                <tr className="h-[19px]">
                  <th className="w-[172px] p-0 pl-[5px] text-left font-normal border-r border-gray-200">Variable</th>
                  <th className="p-0 pl-[5px] text-left font-normal">Value</th>
                </tr>
              </thead>
              <tbody>
                {inputs.map((row, i) => (
                  <tr key={row.name} className={clsx('border-b border-gray-300', i % 2 === 1 && 'bg-[#ececec]')}>
                    <td className="p-0 border-r border-gray-300 leading-none">
                      <span className="flex items-center gap-[2px] pl-[2px]">
                        <KindIcon kind={row.kind} />
                        {row.name}
                      </span>
                    </td>
                    <td className="p-0 pl-[2px] leading-none">{row.value}</td>
                  </tr>
                ))}
              </tbody>
            </table>
            <ScrollBar className="w-[14px]" thumb="mx-px mt-[29px] h-[13px] bg-[#505050]" />
          </div>
          <div className="ml-[7px] w-[81px] flex flex-col justify-end gap-[9px]">
            {['Load', 'Save'].map((b) => (
              <button key={b} className="h-[17px] bg-[#e2e2e2] border border-[#a9a9a9] leading-none">{b}</button>
            ))}
          </div>
        </div>
      </div>

      <div className="flex justify-end gap-[6px] pr-[7px] pt-1 pb-[3px] font-[Roboto,sans-serif]">
        <DialogButton primary>OK</DialogButton>
        <DialogButton>Cancel</DialogButton>
        <DialogButton>Reset</DialogButton>
      </div>

      <svg viewBox="0 0 6 6" className="absolute right-px bottom-px size-[6px]" aria-hidden="true">
        <path d="M5 0v1M5 2.500v1M5 5v1M2.500 2.500v1M2.500 5v1M0 5v1" stroke="#999" strokeWidth="1.5" />
      </svg>

      <svg viewBox="0 0 10 16" className="absolute left-[358px] top-[105px] w-[10px] h-4" aria-hidden="true">
        <path d="M.5 .5v12l3-2.800 2 5 2-.9-2-4.800h4z" fill="#fff" stroke="#222" />
      </svg>
    </div>
  );
}

/* ---------- terminal ---------- */

const mails = [
  'Welcome!',
  'Built-in Virtual Hosting — trading robots and signals now working 24/7',
  'Trading Signals and copy trading',
  'Mobile trading — trade from anywhere at any time!',
];

const terminalTabs: { name: string; badge?: string }[] = [
  { name: 'Trade' },
  { name: 'Exposure' },
  { name: 'Account History' },
  { name: 'News', badge: '66' },
  { name: 'Alerts' },
  { name: 'Mailbox', badge: '7' },
  { name: 'Market', badge: '89' },
  { name: 'Signals' },
  { name: 'Articles' },
  { name: 'Code Base' },
  { name: 'Experts' },
  { name: 'Journal' },
];

function Terminal() {
  return (
    <section className="mt-1 h-[103px] flex border-t-2 border-gray-400 text-black">
      <div className="w-3 flex flex-col items-center justify-between bg-linear-to-b from-[#e3edf7] to-[#b5cbe6]">
        <button aria-label="Close panel" className="w-full h-3 bg-[#f0f0f0] flex items-center justify-center">
          <svg viewBox="0 0 6 6" className="size-[6px]"><path d="M1 1l4 4M5 1L1 5" stroke="#111" strokeWidth="1.3" /></svg>
        </button>
        <h2 className="[writing-mode:vertical-rl] rotate-180 leading-none">Terminal</h2>
      </div>
      <div className="flex-1 flex flex-col">
        <div className="flex border-l border-gray-400 bg-white">
          <table className="flex-1 h-[81px] table-fixed border-collapse">
            <thead>
              <tr className="h-[19px] text-left">
                <th className="w-[55%] p-0 pl-1 font-normal">Headline</th>
                <th className="p-0 pl-[5px] font-normal border-l border-gray-200">From</th>
                <th className="w-[106px] p-0 pr-[6px] font-normal text-right border-l border-gray-200">Time</th>
              </tr>
            </thead>
            <tbody className="font-bold">
              {mails.map((m, i) => (
                <tr key={m} className={clsx('border-t border-gray-300', i % 2 === 0 && 'bg-[#ececec]')}>
                  <td className="p-0 leading-none">
                    <span className="flex items-center gap-[5px] pl-px">
                      <Icon name="mail" className="size-[11px]" />
                      {m}
                    </span>
                  </td>
                  <td className="p-0 pl-1 border-l border-gray-300 leading-none">Trading Platform</td>
                  <td className="p-0 pr-1 border-l border-gray-300 text-right leading-none">2019.11.13 10:58</td>
                </tr>
              ))}
            </tbody>
          </table>
          <div className="flex pr-[2px] bg-[#f0f0f0]">
            <ScrollBar className="w-[14px]" thumb="h-[32px] bg-[#cdcdcd]" />
          </div>
        </div>
        <div className="flex-1 flex items-start bg-[#f3f3f3] border-t border-gray-600 text-gray-500">
          {terminalTabs.map(({ name, badge }) =>
            name === 'Mailbox' ? (
              <button key={name} className="-mt-px h-[17px] px-[7px] flex items-center bg-white border-x border-b border-gray-600 text-black">
                {name}
                <sub className="text-[6px] font-bold text-[#c8202f]">{badge}</sub>
              </button>
            ) : (
              <button key={name} className="my-[3px] h-[10px] pl-2 pr-[7px] flex items-center border-r border-gray-500">
                {name}
                {badge && <sub className="text-[6px] font-bold text-[#c8202f]">{badge}</sub>}
              </button>
            ),
          )}
        </div>
      </div>
    </section>
  );
}

function StatusBar() {
  return (
    <footer className="mt-px h-[18px] pt-px flex items-center border-t border-gray-500 text-black">
      <span className="flex-1 pl-[2px]">For Help, press F1</span>
      <span className="w-[92px] pl-1 border-l border-gray-400">Default</span>
      <span className="w-20 h-3 border-l border-gray-400" />
      <span className="w-14 h-3 border-l border-gray-400" />
      <span className="w-14 h-3 border-l border-gray-400" />
      <span className="w-[53px] h-3 border-l border-gray-400" />
      <span className="w-14 h-3 border-l border-gray-400" />
      <span className="w-[52px] h-3 border-l border-gray-400" />
      <span className="w-[102px] pl-[3px] flex items-center gap-[3px] border-l border-gray-400">
        <svg viewBox="0 0 18 11" className="w-[18px] h-[11px]" aria-hidden="true">
          <path d="M1.500 0v6M4.500 0v6M7.500 0v5M10.500 0v5M13.500 0v4M16.500 0v3" stroke="#2f7a33" strokeWidth="2" />
          <path d="M1.500 6v5M4.500 6v5M7.500 5v6M10.500 5v6M13.500 4v7M16.500 3v8" stroke="#8e2420" strokeWidth="2" />
        </svg>
        777/3 kb
      </span>
    </footer>
  );
}

export default function App() {
  return (
    <div className="min-h-screen flex bg-[#c4c4c4] pl-[35px] pr-[36px] font-['Open_Sans',sans-serif] text-[9px] leading-[12px]">
      <div className="flex-1 min-w-0 flex flex-col bg-[#f0f0f0]">
        <TitleBar />
        <MenuBar />
        <Toolbars />
        <main className="flex">
          <aside className="w-[149px] shrink-0 flex flex-col border-r border-gray-400">
            <MarketWatch />
            <Navigator />
          </aside>
          <div className="relative flex-1 min-w-0 pr-[2px]">
            <PriceChart />
            <QuickTrade />
            <ExpertDialog />
          </div>
        </main>
        <Terminal />
        <StatusBar />
      </div>
    </div>
  );
}
